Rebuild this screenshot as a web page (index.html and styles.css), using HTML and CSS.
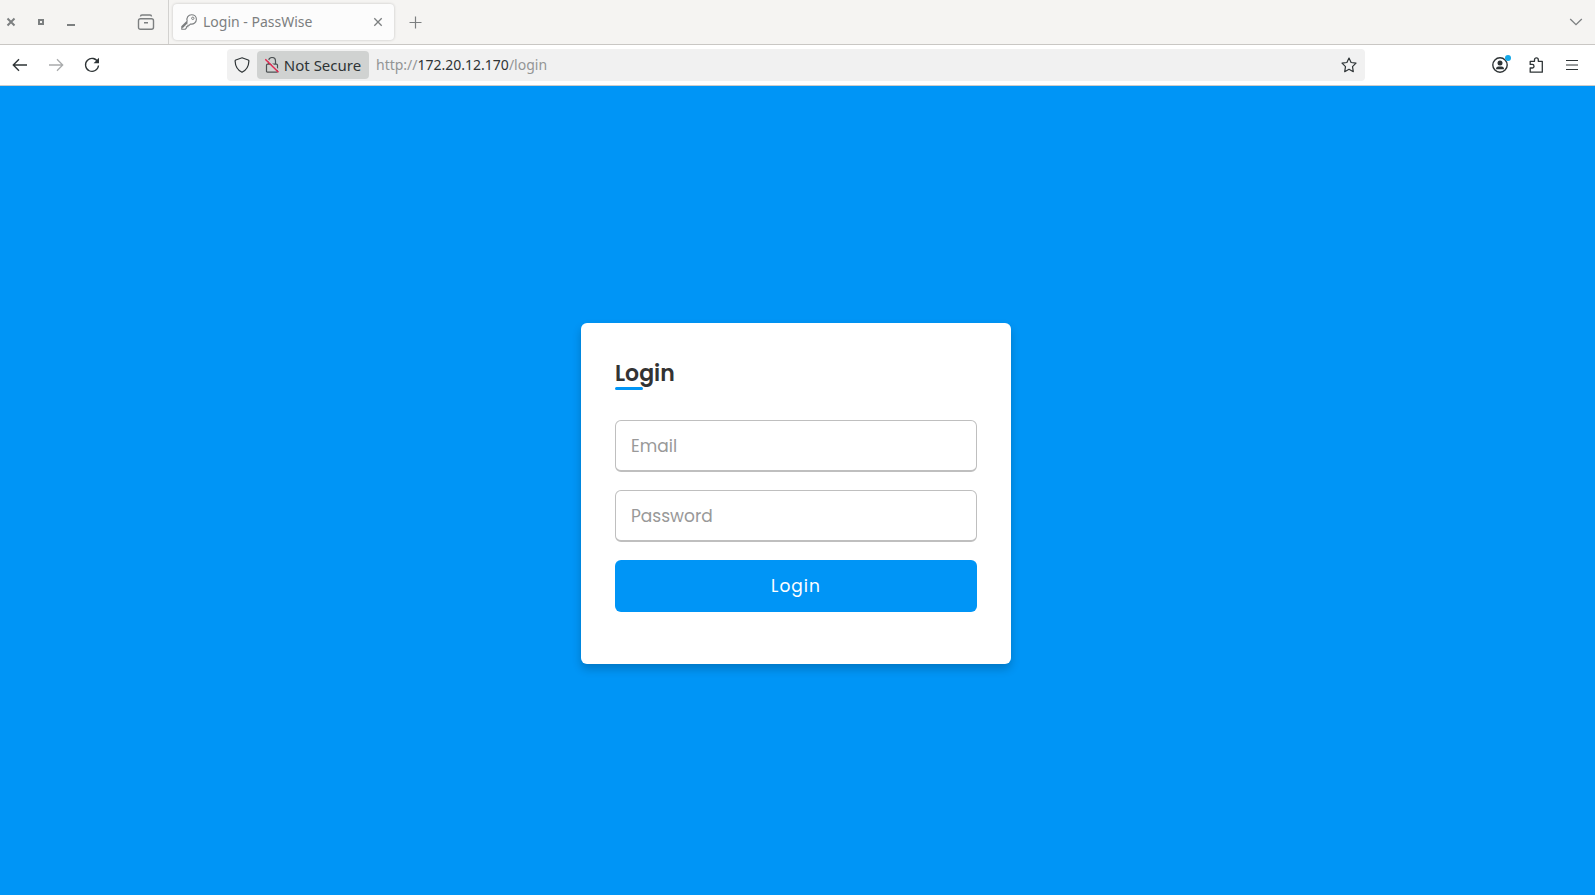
FILE: index.html
```
<!DOCTYPE html>
<html lang="en">
<head>
    <meta charset="UTF-8">
    <meta name="viewport" content="width=device-width, initial-scale=1.0">
    <title>Login - PassWise</title>
    <link rel="stylesheet" href="styles.css">
</head>
<body>
    <!-- Window buttons and tabs -->
    <header class="tab-bar">
        <div class="window-buttons">
            <button class="window-button" aria-label="Close window">
                <svg width="10" height="10" viewBox="0 0 10 10"><path d="M1.5 1.5l7 7M8.5 1.5l-7 7" stroke-width="2"/></svg>
            </button>
            <button class="window-button" aria-label="Maximize window">
                <svg width="10" height="10" viewBox="0 0 10 10"><path d="M3 3h4v4H3z" stroke-width="2"/></svg>
            </button>
            <button class="window-button" aria-label="Minimize window">
                <svg width="10" height="10" viewBox="0 0 10 10"><path d="M1 8h8" stroke-width="2"/></svg>
            </button>
        </div>
        <button class="view-button" aria-label="Recent browsing">
            <svg width="18" height="18" viewBox="0 0 18 18"><path d="M3.5 3.5Q3.5 2 5 2h8q1.5 0 1.5 1.5M3.5 5.7h11q2 0 2 2v6.500q0 2-2 2h-11q-2 0-2-2V7.700q0-2 2-2zM7 9.700h4" stroke-width="1.4"/></svg>
        </button>
        <div class="tab">
            <svg width="16" height="16" viewBox="0 0 16 16"><path d="M6.2 7.2C5 3.5 7.5.7 10.5.7c2.8 0 4.9 2 4.9 4.6 0 3-2.7 5.3-6 4.7l-1 1.200H6.900v1.500H5.400v1.400L4.300 15.200H.8v-2.700zM1.500 13.500l5-5" stroke-width="1.1"/><circle cx="11.8" cy="4.3" r="1.2" stroke-width="1"/></svg>
            <span class="tab-title">Login - PassWise</span>
            <button class="tab-close" aria-label="Close tab">
                <svg width="10" height="10" viewBox="0 0 10 10"><path d="M1.300 1.300l7.400 7.400M8.700 1.300L1.300 8.700" stroke-width="1.3"/></svg>
            </button>
        </div>
        <button class="new-tab" aria-label="New tab">
            <svg width="13" height="13" viewBox="0 0 13 13"><path d="M6.5 .5v12M.5 6.5h12" stroke-width="1.2"/></svg>
        </button>
        <button class="all-tabs" aria-label="List all tabs">
            <svg width="14" height="10" viewBox="0 0 14 10"><path d="M1.2 2L7 7.700 12.800 2" stroke-width="1.3"/></svg>
        </button>
    </header>

    <!-- Navigation toolbar -->
    <nav class="toolbar">
        <button class="tool-button" aria-label="Back">
            <svg width="16" height="16" viewBox="0 0 16 16"><path d="M15 8H1.500M7 2.300L1.300 8 7 13.700" stroke-width="1.4"/></svg>
        </button>
        <button class="tool-button faded" aria-label="Forward">
            <svg width="16" height="16" viewBox="0 0 16 16"><path d="M1 8h13.500M9 2.300L14.700 8 9 13.700" stroke-width="1.3"/></svg>
        </button>
        <button class="tool-button" aria-label="Reload">
            <svg width="16" height="16" viewBox="0 0 16 16"><path d="M14 5.300A6.500 6.500 0 1 0 14.500 8.500" stroke-width="1.3"/><path class="solid" d="M15 .8v5.400H9.600z"/></svg>
        </button>
        <div class="url-bar">
            <button class="shield" aria-label="Tracking protection">
                <svg width="16" height="16" viewBox="0 0 16 16"><path d="M8 .8L14.200 3q.7.300.7 1C14.700 9.500 12 13.300 8 15.300 4 13.300 1.300 9.500 1.100 4q0-.7.7-1z" stroke-width="1.2"/></svg>
            </button>
            <button class="security">
                <svg width="14" height="16" viewBox="0 0 14 16"><path class="lock" d="M3.500 7V4a3.500 3.500 0 0 1 7 0v3M2.500 7.200h9q1 0 1 1v6q0 1-1 1h-9q-1 0-1-1v-6q0-1 1-1z" stroke-width="1.2"/><path class="slash-gap" d="M1.300 1.500l13 12.500" stroke-width="1.3"/><path class="slash" d="M.3 2.300l13.200 12.900" stroke-width="1.4"/></svg>
                <span>Not Secure</span>
            </button>
            <div class="address" role="textbox" aria-label="Address" contenteditable="true" spellcheck="false">http://<span class="host">172.20.12.170</span>/login</div>
            <button class="bookmark" aria-label="Bookmark this page">
                <svg width="16" height="16" viewBox="0 0 16 16"><path d="M8 1l2.100 4.500 4.900.7-3.500 3.500.8 5L8 12.300l-4.300 2.400.8-5L1 6.200l4.900-.7z" stroke-width="1.2" stroke-linejoin="round"/></svg>
            </button>
        </div>
        <button class="tool-button account" aria-label="Account">
            <svg width="16" height="16" viewBox="0 0 16 16"><circle cx="8" cy="8" r="7.200" stroke-width="1.4"/><circle class="solid" cx="8" cy="6" r="2.500"/><path class="solid" d="M4 12.300q0-2.800 2.500-2.800h3q2.500 0 2.500 2.800z"/></svg>
        </button>
        <button class="tool-button" aria-label="Extensions">
            <svg width="16" height="16" viewBox="0 0 16 16"><path d="M2.200 15.200V11h2a1.800 1.800 0 0 0 0-3.600h-2V4.300h4.300V2.800a1.900 1.900 0 0 1 3.800 0v1.500h4v10.900z" stroke-width="1.3" stroke-linejoin="round"/></svg>
        </button>
        <button class="tool-button" aria-label="Open menu">
            <svg width="16" height="16" viewBox="0 0 16 16"><path d="M2 3.500h12M2 8h12M2 12.500h12" stroke-width="1.2"/></svg>
        </button>
    </nav>

    <!-- Login page -->
    <main class="page">
        <form class="login-card">
            <h1 class="title">Login</h1>
            <input class="field" type="email" placeholder="Email" aria-label="Email">
            <input class="field" type="password" placeholder="Password" aria-label="Password">
            <button class="submit" type="submit">Login</button>
        </form>
    </main>
</body>
</html>
```
FILE: styles.css
```
* {
    margin: 0;
    padding: 0;
    box-sizing: border-box;
}

body {
    min-height: 100vh;
    display: flex;
    flex-direction: column;
    font-family: "Noto Sans", sans-serif;
    font-size: 14px;
    line-height: 20px;
    color: #2e3436;
}

button {
    display: flex;
    align-items: center;
    justify-content: center;
    flex-shrink: 0;
    border: none;
    background: none;
    color: inherit;
    font: inherit;
}

svg {
    flex-shrink: 0;
    fill: none;
    stroke: currentColor;
}

.solid {
    fill: currentColor;
    stroke: none;
}

/* Tab bar */
.tab-bar {
    display: flex;
    align-items: center;
    height: 45px;
    background: #f5f4f2;
    border-bottom: 1px solid #c9c7c4;
    color: #7c7f80;
}

.window-buttons {
    display: flex;
    gap: 8px;
}

.window-button {
    width: 22px;
    height: 24px;
}

.view-button {
    width: 45px;
    height: 44px;
    margin-left: 42px;
    border-right: 1px solid #d2d1cf;
}

.tab {
    display: flex;
    align-items: center;
    width: 221px;
    height: 36px;
    margin-left: 4px;
    padding: 0 8px;
    background: #fcfcfc;
    border-radius: 4px;
    box-shadow: 0 0 3px rgba(0, 0, 0, 0.2);
}

.tab-title {
    flex: 1;
    margin-left: 6px;
}

.tab-close {
    width: 16px;
    height: 24px;
}

.new-tab {
    width: 36px;
    height: 36px;
    margin-left: 3px;
}

.all-tabs {
    width: 38px;
    height: 36px;
    margin-left: auto;
}

/* Navigation toolbar */
.toolbar {
    display: flex;
    align-items: center;
    height: 41px;
    padding: 0 5px 0 2px;
    background: #fff;
    border-bottom: 1px solid #ccc;
}

.tool-button {
    width: 36px;
    height: 32px;
}

.faded {
    color: #a9abac;
}

.url-bar {
    flex: 1;
    display: flex;
    align-items: center;
    height: 32px;
    margin: 0 117px;
    background: #f1f1f1;
    border-radius: 4px;
}

.shield {
    width: 30px;
    height: 28px;
}

.security {
    gap: 5px;
    width: 112px;
    height: 28px;
    background: #d0d2d1;
    border-radius: 4px;
    font-size: 15px;
}

.lock {
    stroke: #4c5153;
}

.slash {
    stroke: #e22850;
}

.slash-gap {
    stroke: #d0d2d1;
}

.address {
    flex: 1;
    margin-left: 7px;
    color: #939596;
    white-space: nowrap;
    outline: none;
}

.host {
    color: #2e3436;
}

.bookmark {
    width: 32px;
    height: 32px;
}

.account {
    position: relative;
}

/* Notification dot */
.account::after {
    content: "";
    position: absolute;
    top: 6px;
    right: 7px;
    width: 6px;
    height: 6px;
    border-radius: 50%;
    background: #15a8e8;
}

/* Login page */
.page {
    flex: 1;
    display: flex;
    align-items: center;
    justify-content: center;
    padding: 6px 3px 0 0;
    background: #0095f6;
    font-family: Poppins, sans-serif;
}

.login-card {
    display: flex;
    flex-direction: column;
    gap: 18px;
    width: 100%;
    max-width: 430px;
    padding: 34px 34px 52px;
    background: #fff;
    border-radius: 6px;
    box-shadow: 0 5px 10px rgba(0, 0, 0, 0.2);
}

.title {
    position: relative;
    margin-bottom: 12px;
    font-size: 22px;
    font-weight: 600;
    line-height: 33px;
    color: #333;
}

.title::before {
    content: "";
    position: absolute;
    left: 0;
    bottom: 0;
    width: 28px;
    height: 3px;
    border-radius: 12px;
    background: #0095f6;
}

.field {
    width: 100%;
    height: 52px;
    padding: 0 15px;
    border: 1px solid #bfbfbf;
    border-bottom-width: 2px;
    border-radius: 6px;
    outline: none;
    font-family: inherit;
    font-size: 17px;
    color: #333;
}

.field::placeholder {
    color: #999;
}

.submit {
    height: 52px;
    background: #0095f6;
    border-radius: 6px;
    color: #fff;
    font-size: 17px;
    letter-spacing: 1px;
    cursor: pointer;
}
```
